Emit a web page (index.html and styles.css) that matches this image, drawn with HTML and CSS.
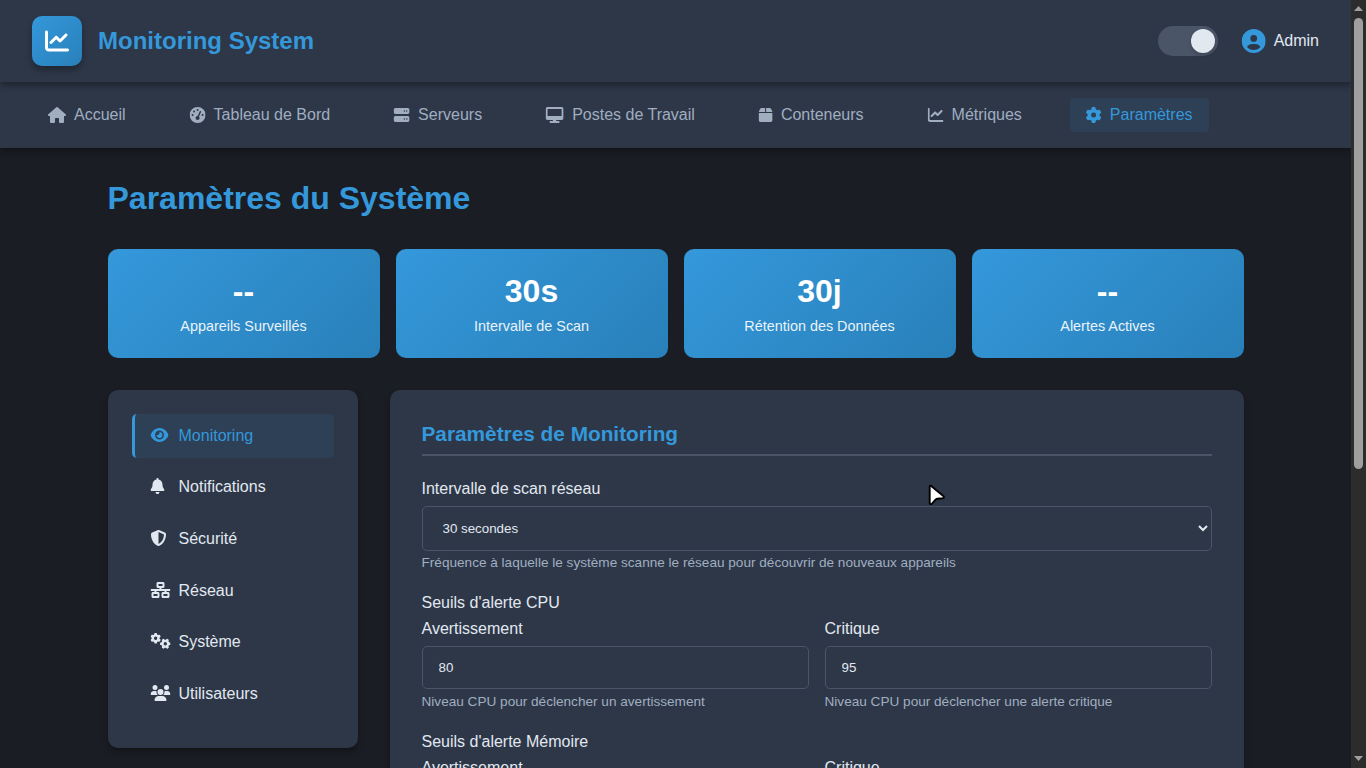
FILE: index.html
```html
<!DOCTYPE html>
<html lang="fr">
<head>
<meta charset="utf-8">
<title>Paramètres - Monitoring System</title>
<link rel="stylesheet" href="styles.css">
</head>
<body>
<svg class="defs" aria-hidden="true">
  <symbol id="chart" viewBox="0 0 512 512"><path d="M64 64c0-17.700-14.300-32-32-32S0 46.300 0 64V400c0 44.200 35.800 80 80 80H480c17.700 0 32-14.300 32-32s-14.300-32-32-32H80c-8.800 0-16-7.200-16-16V64zm406.600 86.600c12.500-12.500 12.500-32.800 0-45.300s-32.800-12.500-45.300 0L320 210.700l-57.400-57.400c-12.500-12.500-32.800-12.500-45.300 0l-112 112c-12.500 12.500-12.500 32.800 0 45.300s32.800 12.500 45.300 0L240 221.300l57.400 57.400c12.500 12.500 32.800 12.500 45.300 0l128-128z"/></symbol>
  <symbol id="gear" viewBox="0 0 512 512"><path id="gear-shape" d="M495.900 166.600c3.200 8.700 .5 18.400-6.400 24.600l-43.300 39.400c1.100 8.300 1.700 16.800 1.700 25.400s-.6 17.100-1.700 25.400l43.300 39.400c6.900 6.200 9.600 15.900 6.400 24.600c-4.400 11.900-9.700 23.300-15.800 34.300l-4.700 8.100c-6.600 11-14 21.400-22.100 31.200c-5.900 7.200-15.700 9.600-24.500 6.800l-55.700-17.700c-13.400 10.300-28.200 18.900-44 25.400l-12.500 57.100c-2 9.100-9 16.300-18.200 17.800c-13.800 2.300-28 3.500-42.500 3.500s-28.700-1.200-42.500-3.500c-9.200-1.500-16.200-8.700-18.200-17.800l-12.500-57.100c-15.800-6.500-30.600-15.100-44-25.400L83.100 425.900c-8.800 2.800-18.600 .3-24.500-6.800c-8.100-9.800-15.500-20.200-22.100-31.200l-4.700-8.100c-6.100-11-11.400-22.400-15.800-34.300c-3.200-8.700-.5-18.400 6.400-24.600l43.300-39.400C64.600 273.100 64 264.600 64 256s.6-17.100 1.700-25.400L22.400 191.200c-6.900-6.200-9.600-15.900-6.400-24.600c4.400-11.900 9.700-23.300 15.800-34.300l4.700-8.100c6.600-11 14-21.400 22.100-31.200c5.900-7.200 15.700-9.600 24.500-6.800l55.700 17.700c13.400-10.300 28.200-18.900 44-25.400l12.500-57.100c2-9.100 9-16.300 18.200-17.800C227.300 1.200 241.500 0 256 0s28.700 1.200 42.500 3.500c9.200 1.500 16.200 8.700 18.200 17.800l12.500 57.100c15.800 6.500 30.600 15.100 44 25.400l55.700-17.700c8.800-2.800 18.600-.3 24.500 6.800c8.100 9.800 15.500 20.200 22.100 31.200l4.700 8.100c6.100 11 11.400 22.400 15.800 34.300zM256 336a80 80 0 1 0 0-160 80 80 0 1 0 0 160z"/></symbol>
</svg>
<div class="window">
<div class="page">
  <header class="header">
    <div class="brand">
      <div class="logo"><svg width="24" height="24"><use href="#chart"/></svg></div>
      <span class="brand-name">Monitoring System</span>
    </div>
    <div class="header-actions">
      <div class="toggle"><span class="knob"></span></div>
      <div class="user">
        <svg class="avatar" width="24" height="24" viewBox="0 0 512 512"><path d="M399 384.200C376.900 345.800 335.400 320 288 320H224c-47.400 0-88.900 25.800-111 64.200c35.200 39.200 86.200 63.800 143 63.800s107.800-24.700 143-63.800zM0 256a256 256 0 1 1 512 0A256 256 0 1 1 0 256zm256 16a72 72 0 1 0 0-144 72 72 0 1 0 0 144z"/></svg>
        <span>Admin</span>
      </div>
    </div>
  </header>
  <nav class="nav">
    <a class="nav-link"><svg width="18" height="16" viewBox="0 0 576 512"><path d="M575.800 255.500c0 18-15 32.100-32 32.100h-32l.7 160.200c0 2.700-.2 5.400-.5 8.100V472c0 22.100-17.900 40-40 40H456c-1.100 0-2.200 0-3.300-.1c-1.400 .1-2.800 .1-4.200 .1H416 392c-22.100 0-40-17.900-40-40V448 384c0-17.700-14.300-32-32-32H256c-17.700 0-32 14.300-32 32v64 24c0 22.100-17.900 40-40 40H160 128.100c-1.500 0-3-.1-4.500-.2c-1.200 .1-2.400 .2-3.600 .2H104c-22.100 0-40-17.900-40-40V360c0-.9 0-1.900 .1-2.800V287.600H32c-18 0-32-14-32-32.100c0-9 3-17 10-24L266.400 8c7-7 15-8 22-8s15 2 21 7L564.800 231.500c8 7 12 15 11 24z"/></svg><span>Accueil</span></a>
    <a class="nav-link"><svg width="16" height="16" viewBox="0 0 512 512"><path d="M0 256a256 256 0 1 1 512 0A256 256 0 1 1 0 256zM288 96a32 32 0 1 0 -64 0 32 32 0 1 0 64 0zM256 416c35.300 0 64-28.700 64-64c0-17.400-6.900-33.100-18.100-44.600L366 161.700c5.300-12.100-.2-26.300-12.300-31.600s-26.300 .2-31.600 12.300L257.900 288c-.6 0-1.300 0-1.900 0c-35.300 0-64 28.700-64 64s28.700 64 64 64zM176 144a32 32 0 1 0 -64 0 32 32 0 1 0 64 0zM96 288a32 32 0 1 0 0-64 32 32 0 1 0 0 64zm352-32a32 32 0 1 0 -64 0 32 32 0 1 0 64 0z"/></svg><span>Tableau de Bord</span></a>
    <a class="nav-link"><svg width="16" height="16" viewBox="0 0 512 512"><path d="M64 32C28.700 32 0 60.700 0 96v64c0 35.300 28.700 64 64 64H448c35.300 0 64-28.700 64-64V96c0-35.300-28.700-64-64-64H64zm280 72a24 24 0 1 1 0 48 24 24 0 1 1 0-48zm48 24a24 24 0 1 1 48 0 24 24 0 1 1 -48 0zM64 288c-35.300 0-64 28.700-64 64v64c0 35.300 28.700 64 64 64H448c35.300 0 64-28.700 64-64V352c0-35.300-28.700-64-64-64H64zm280 72a24 24 0 1 1 0 48 24 24 0 1 1 0-48zm56 24a24 24 0 1 1 48 0 24 24 0 1 1 -48 0z"/></svg><span>Serveurs</span></a>
    <a class="nav-link"><svg width="18" height="16" viewBox="0 0 576 512"><path d="M64 0C28.700 0 0 28.700 0 64V352c0 35.300 28.700 64 64 64H240l-10.700 32H160c-17.700 0-32 14.300-32 32s14.300 32 32 32H416c17.700 0 32-14.300 32-32s-14.300-32-32-32H346.700L336 416H512c35.300 0 64-28.700 64-64V64c0-35.300-28.700-64-64-64H64zM512 64V288H64V64H512z"/></svg><span>Postes de Travail</span></a>
    <a class="nav-link"><svg width="14" height="16" viewBox="0 0 448 512"><path d="M50.700 58.500L0 160H208V32H93.700C75.500 32 58.900 42.300 50.700 58.500zM240 160H448L397.300 58.500C389.100 42.300 372.500 32 354.300 32H240V160zm208 32H0V416c0 35.300 28.700 64 64 64H384c35.300 0 64-28.700 64-64V192z"/></svg><span>Conteneurs</span></a>
    <a class="nav-link"><svg width="16" height="16"><use href="#chart"/></svg><span>Métriques</span></a>
    <a class="nav-link active"><svg width="16" height="16"><use href="#gear"/></svg><span>Paramètres</span></a>
  </nav>
  <main class="main">
    <h1 class="title">Paramètres du Système</h1>
    <section class="stats">
      <div class="stat"><div class="stat-value">--</div><div class="stat-label">Appareils Surveillés</div></div>
      <div class="stat"><div class="stat-value">30s</div><div class="stat-label">Intervalle de Scan</div></div>
      <div class="stat"><div class="stat-value">30j</div><div class="stat-label">Rétention des Données</div></div>
      <div class="stat"><div class="stat-value">--</div><div class="stat-label">Alertes Actives</div></div>
    </section>
    <div class="settings">
      <aside class="sidebar">
        <a class="side-link active"><span class="side-icon"><svg width="18" height="16" viewBox="0 0 576 512"><path d="M288 32c-80.800 0-145.500 36.800-192.600 80.600C48.600 156 17.300 208 2.500 243.700c-3.300 7.900-3.300 16.700 0 24.600C17.300 304 48.600 356 95.400 399.400C142.500 443.200 207.200 480 288 480s145.500-36.800 192.600-80.600c46.800-43.500 78.100-95.400 93-131.100c3.300-7.900 3.300-16.700 0-24.600c-14.900-35.700-46.200-87.700-93-131.100C433.500 68.800 368.800 32 288 32zM144 256a144 144 0 1 1 288 0 144 144 0 1 1 -288 0zm144-64c0 35.300-28.700 64-64 64c-7.100 0-13.900-1.200-20.300-3.300c-5.500-1.800-11.900 1.600-11.700 7.400c.3 6.900 1.300 13.800 3.200 20.700c13.700 51.200 66.400 81.600 117.600 67.900s81.600-66.400 67.900-117.600c-11.100-41.500-47.800-69.400-88.600-71.100c-5.800-.2-9.200 6.100-7.400 11.700c2.100 6.400 3.300 13.200 3.300 20.300z"/></svg></span><span>Monitoring</span></a>
        <a class="side-link"><span class="side-icon"><svg width="14" height="16" viewBox="0 0 448 512"><path d="M224 0c-17.700 0-32 14.300-32 32V51.200C119 66 64 130.600 64 208v18.800c0 47-17.300 92.400-48.500 127.600l-7.400 8.300c-8.400 9.400-10.400 22.900-5.300 34.400S19.400 416 32 416H416c12.600 0 24-7.400 29.200-18.900s3.100-25-5.300-34.400l-7.400-8.300C401.300 319.200 384 273.900 384 226.800V208c0-77.400-55-142-128-156.800V32c0-17.700-14.300-32-32-32zm45.300 493.300c12-12 18.700-28.300 18.700-45.300H224 160c0 17 6.700 33.300 18.700 45.300s28.300 18.700 45.300 18.700s33.300-6.700 45.300-18.700z"/></svg></span><span>Notifications</span></a>
        <a class="side-link"><span class="side-icon"><svg width="16" height="16" viewBox="0 0 512 512"><path d="M256 0c4.600 0 9.200 1 13.400 2.900L457.700 82.800c22 9.300 38.400 31 38.300 57.200c-.5 99.200-41.300 280.700-213.600 363.200c-16.700 8-36.100 8-52.800 0C57.300 420.700 16.500 239.200 16 140c-.1-26.200 16.300-47.900 38.300-57.200L242.700 2.900C246.800 1 251.400 0 256 0zm0 66.800V444.800C394 378 431.100 230.100 432 141.400L256 66.800z"/></svg></span><span>Sécurité</span></a>
        <a class="side-link"><span class="side-icon"><svg width="20" height="16" viewBox="0 0 640 512"><path d="M256 64H384v64H256V64zM240 0c-26.500 0-48 21.500-48 48v96c0 26.500 21.500 48 48 48h48v32H32c-17.700 0-32 14.300-32 32s14.300 32 32 32h96v32H80c-26.500 0-48 21.500-48 48v96c0 26.500 21.500 48 48 48H240c26.500 0 48-21.500 48-48V368c0-26.500-21.500-48-48-48H192V288H448v32H400c-26.500 0-48 21.500-48 48v96c0 26.500 21.500 48 48 48H560c26.500 0 48-21.500 48-48V368c0-26.500-21.500-48-48-48H512V288h96c17.700 0 32-14.300 32-32s-14.300-32-32-32H352V192h48c26.500 0 48-21.500 48-48V48c0-26.500-21.500-48-48-48H240zM96 448V384H224v64H96zm320-64H544v64H416V384z" fill-rule="evenodd"/></svg></span><span>Réseau</span></a>
        <a class="side-link"><span class="side-icon"><svg width="20" height="16" viewBox="0 0 640 512"><use href="#gear-shape" transform="translate(164 168) scale(.66) translate(-256 -256)"/><use href="#gear-shape" transform="translate(474 345) rotate(30) scale(.66) translate(-256 -256)"/></svg></span><span>Système</span></a>
        <a class="side-link"><span class="side-icon"><svg width="20" height="16" viewBox="0 0 640 512"><path d="M144 0a80 80 0 1 1 0 160A80 80 0 1 1 144 0zM512 0a80 80 0 1 1 0 160A80 80 0 1 1 512 0zM0 298.700C0 239.800 47.800 192 106.700 192h42.700c15.900 0 31 3.500 44.600 9.700c-1.300 7.200-1.900 14.700-1.900 22.300c0 38.200 16.800 72.500 43.300 96c-.2 0-.4 0-.7 0H21.300C9.600 320 0 310.400 0 298.700zM405.300 320c-.2 0-.4 0-.7 0c26.600-23.500 43.300-57.800 43.300-96c0-7.600-.7-15-1.900-22.300c13.600-6.300 28.700-9.700 44.600-9.700h42.700C592.200 192 640 239.800 640 298.700c0 11.800-9.600 21.300-21.300 21.300H405.300zM224 224a96 96 0 1 1 192 0 96 96 0 1 1 -192 0zM128 485.300C128 411.700 187.700 352 261.300 352H378.700C452.300 352 512 411.700 512 485.300c0 14.700-11.900 26.700-26.700 26.700H154.700c-14.700 0-26.700-11.900-26.700-26.700z"/></svg></span><span>Utilisateurs</span></a>
      </aside>
      <section class="panel">
        <h2 class="panel-title">Paramètres de Monitoring</h2>
        <div class="group">
          <label class="label">Intervalle de scan réseau</label>
          <select class="control select"><option>30 secondes</option></select>
          <div class="help">Fréquence à laquelle le système scanne le réseau pour découvrir de nouveaux appareils</div>
        </div>
        <div class="group">
          <label class="label">Seuils d'alerte CPU</label>
          <div class="pair">
            <div><label class="label">Avertissement</label><input class="control" value="80"><div class="help">Niveau CPU pour déclencher un avertissement</div></div>
            <div><label class="label">Critique</label><input class="control" value="95"><div class="help">Niveau CPU pour déclencher une alerte critique</div></div>
          </div>
        </div>
        <div class="group">
          <label class="label">Seuils d'alerte Mémoire</label>
          <div class="pair">
            <div><label class="label">Avertissement</label></div>
            <div><label class="label">Critique</label></div>
          </div>
        </div>
      </section>
    </div>
  </main>
</div>
<div class="scrollbar">
  <svg class="arrow" width="9" height="5" viewBox="0 0 9 5"><path d="M0 5L4.500 0L9 5z"/></svg>
  <div class="thumb"></div>
  <svg class="arrow arrow-down" width="9" height="5" viewBox="0 0 9 5"><path d="M0 0L4.500 5L9 0z"/></svg>
</div>
</div>
<svg class="cursor" width="20" height="24" viewBox="0 0 20 24"><path d="M2.700 3.700Q2.800 2 4.200 2.900L16.300 12.900Q18 15 15.500 15.300L10.300 15.700Q9.200 15.900 8.300 17L5.200 20.400Q3 22 2.700 19.800z"/></svg>
</body>
</html>
```
FILE: styles.css
```css
* { box-sizing: border-box; margin: 0; padding: 0; }
body {
  height: 768px;
  overflow: hidden;
  background: #1a1d23;
  color: #e2e8f0;
  font-family: "Liberation Sans", Arial, sans-serif;
  font-size: 16px;
  line-height: 18px;
}
svg { display: block; fill: currentColor; flex: none; }
.defs { display: none; }
.window { display: flex; height: 768px; }
.page { flex: 1; min-width: 0; overflow: hidden; }

.header {
  position: relative;
  z-index: 2;
  display: flex;
  justify-content: space-between;
  align-items: center;
  height: 82px;
  padding: 16px 32px;
  background: #2d3748;
  box-shadow: 0 4px 6px rgba(0, 0, 0, .3);
}
.brand { display: flex; align-items: center; gap: 16px; }
.logo {
  display: flex;
  align-items: center;
  justify-content: center;
  width: 50px;
  height: 50px;
  border-radius: 10px;
  color: #fff;
  background: linear-gradient(135deg, #3498db, #2980b9);
  box-shadow: 0 4px 6px rgba(0, 0, 0, .3);
}
.brand-name { font-size: 24px; line-height: 28px; font-weight: bold; color: #3498db; }
.header-actions { display: flex; align-items: center; gap: 24px; }
.toggle {
  display: flex;
  justify-content: flex-end;
  width: 60px;
  height: 30px;
  padding: 3px;
  border-radius: 15px;
  background: #4a5568;
}
.knob { width: 24px; height: 24px; border-radius: 50%; background: #e2e8f0; box-shadow: 0 2px 4px rgba(0, 0, 0, .2); }
.user { display: flex; align-items: center; gap: 8px; }
.avatar { color: #3498db; transform: translateX(-.3px); }

.nav {
  position: relative;
  z-index: 1;
  display: flex;
  gap: 32px;
  height: 66px;
  padding: 16px 32px;
  background: #2d3748;
  box-shadow: 0 4px 6px rgba(0, 0, 0, .3);
}
.nav-link {
  display: flex;
  align-items: center;
  gap: 8px;
  padding: 8px 16px;
  border-radius: 4px;
  color: #a0aec0;
}
.nav-link svg { transform: translateX(-.4px); }
.nav-link:first-child svg { transform: none; }
.nav-link.active, .side-link.active { color: #3498db; background: rgba(52, 152, 219, .1); }

.main { max-width: 1200px; margin: 0 auto; padding: 32px; }
.title { margin-bottom: 32px; font-size: 32px; line-height: 37px; color: #3498db; }
.stats { display: grid; grid-template-columns: repeat(4, 1fr); gap: 16px; margin-bottom: 32px; }
.stat {
  padding: 24px;
  border-radius: 10px;
  text-align: center;
  color: #fff;
  background: linear-gradient(135deg, #3498db, #2980b9);
}
.stat-value { margin-bottom: 8px; font-size: 32px; line-height: 37px; font-weight: bold; }
.stat-label { font-size: 14.4px; line-height: 16px; opacity: .9; }

.settings { display: grid; grid-template-columns: 250px 1fr; gap: 32px; align-items: start; }
.sidebar, .panel { border-radius: 10px; background: #2d3748; box-shadow: 0 4px 6px rgba(0, 0, 0, .3); }
.sidebar { padding: 24px; }
.side-link {
  display: flex;
  align-items: center;
  gap: 8px;
  margin-bottom: 8px;
  padding: 12.8px 16px;
  border-left: 3px solid transparent;
  border-radius: 5px;
}
.side-link.active { border-left-color: #3498db; }
.side-icon { display: flex; width: 20px; height: 16px; }
.side-icon svg { margin: -1px 0 1px -.5px; transform: translateX(.5px); }

.panel { padding: 32px; }
.panel-title {
  margin-bottom: 24px;
  padding-bottom: 8px;
  border-bottom: 2px solid #4a5568;
  font-size: 20.8px;
  line-height: 24px;
  color: #3498db;
}
.group { margin-bottom: 24px; }
.label { display: block; margin-bottom: 8px; }
.control {
  display: block;
  width: 100%;
  height: 43px;
  padding: 12px 16px;
  border: 1px solid #4a5568;
  border-radius: 5px;
  color: #e2e8f0;
  background: #2d3748;
  font-family: "Liberation Sans", Arial, sans-serif;
  font-size: 13.333px;
}
.select { height: 45px; }
.help { height: 15px; margin-top: 4px; font-size: 13.6px; line-height: 16px; color: #a0aec0; }
.pair { display: grid; grid-template-columns: 1fr 1fr; gap: 16px; }
.pair .help { margin-top: 5px; }

.scrollbar {
  display: flex;
  flex-direction: column;
  align-items: center;
  width: 15px;
  padding: 6px 0 7px;
  color: #9f9f9f;
  background: #2c2c2c;
}
.thumb { width: 9px; height: 451px; margin-top: 7px; border-radius: 5px; background: #9f9f9f; }
.arrow-down { margin-top: auto; }
.cursor { position: absolute; left: 927px; top: 483px; z-index: 5; fill: #fff; stroke: #000; stroke-width: 1.9; stroke-linejoin: round; }
```
